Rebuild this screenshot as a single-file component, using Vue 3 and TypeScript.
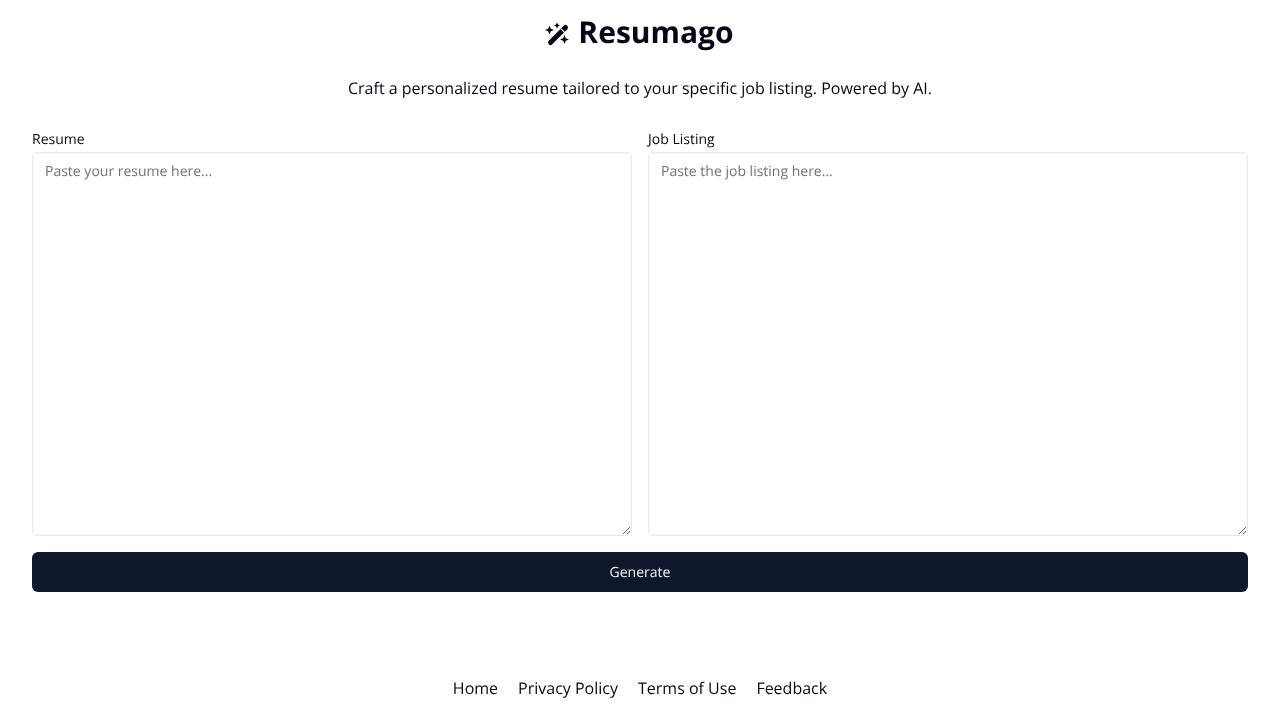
<script setup lang="ts">
const footerLinks = ['Home', 'Privacy Policy', 'Terms of Use', 'Feedback'];
</script>

<template>
  <div class="page">
    <header class="header">
      <h1 class="title">
        <svg class="logo" viewBox="0 0 24 24" aria-hidden="true">
          <path d="M4.500 20.500 19.500 5.500" stroke="currentColor" stroke-width="5" stroke-linecap="round" fill="none" />
          <path d="M15 6.800 18.200 10" stroke="#fff" stroke-width="1.200" fill="none" />
          <path d="M3.500 3.500 4.800 6.700 8 8 4.800 9.300 3.500 12.500 2.200 9.300 -1 8 2.200 6.700Z" fill="currentColor" />
          <path d="M11 0.500 12 2.500 14 3.500 12 4.500 11 6.500 10 4.500 8 3.500 10 2.500Z" fill="currentColor" />
          <path d="M18.500 13 19.800 16.200 23 17.500 19.800 18.800 18.500 22 17.200 18.800 14 17.500 17.200 16.200Z" fill="currentColor" />
        </svg>
        <span>Resumago</span>
      </h1>
      <p class="subtitle">Craft a personalized resume tailored to your specific job listing. Powered by AI.</p>
    </header>

    <main class="form">
      <div class="fields">
        <label class="field">
          <span class="label">Resume</span>
          <textarea class="input" placeholder="Paste your resume here..."></textarea>
        </label>
        <label class="field">
          <span class="label">Job Listing</span>
          <textarea class="input" placeholder="Paste the job listing here..."></textarea>
        </label>
      </div>
      <button class="generate" type="button">Generate</button>
    </main>

    <footer class="footer">
      <a v-for="link in footerLinks" :key="link" class="link" href="#">{{ link }}</a>
    </footer>
  </div>
</template>

<style>
html,
body {
  margin: 0;
  background: #fff;
}
</style>

<style scoped>
.page {
  height: 720px;
  box-sizing: border-box;
  padding: 0 32px;
  font-family: "Open Sans", sans-serif;
  color: #020817;
  text-rendering: geometricPrecision;
  will-change: transform;
  overflow: hidden;
}

.header {
  display: flex;
  flex-direction: column;
  align-items: center;
  padding-top: 12px;
}

.title {
  display: flex;
  align-items: center;
  gap: 8px;
  margin: 0;
  height: 40px;
  font-size: 30px;
  line-height: 40px;
  font-weight: 700;
}

.logo {
  width: 24px;
  height: 24px;
  margin-top: 3px;
  overflow: visible;
}

.subtitle {
  margin: 24px 0 0;
  font-size: 16px;
  line-height: 24px;
}

.form {
  margin-top: 33px;
}

.fields {
  display: grid;
  grid-template-columns: 1fr 1fr;
  gap: 16px;
}

.field {
  display: flex;
  flex-direction: column;
  gap: 5px;
}

.label {
  font-size: 14px;
  line-height: 14px;
  font-weight: 500;
}

.input {
  box-sizing: border-box;
  display: block;
  width: 100%;
  height: 384px;
  padding: 9px 12px 7px;
  border: 1px solid #e5e7eb;
  border-radius: 6px;
  background: #fff;
  color: #020817;
  font-family: inherit;
  font-size: 14px;
  line-height: 20px;
  text-rendering: inherit;
  outline: none;
}

.input::placeholder {
  color: #6b7280;
  opacity: 1;
}

.generate {
  display: block;
  width: 100%;
  height: 40px;
  margin-top: 16px;
  border: none;
  border-radius: 6px;
  background: #0f172a;
  color: #f1f5f9;
  font-family: inherit;
  font-size: 14px;
  font-weight: 500;
  text-rendering: inherit;
  cursor: pointer;
}

.footer {
  display: flex;
  justify-content: center;
  gap: 20px;
  margin-top: 84px;
  font-size: 16px;
  line-height: 24px;
}

.link {
  color: #020817;
  text-decoration: none;
}
</style>
